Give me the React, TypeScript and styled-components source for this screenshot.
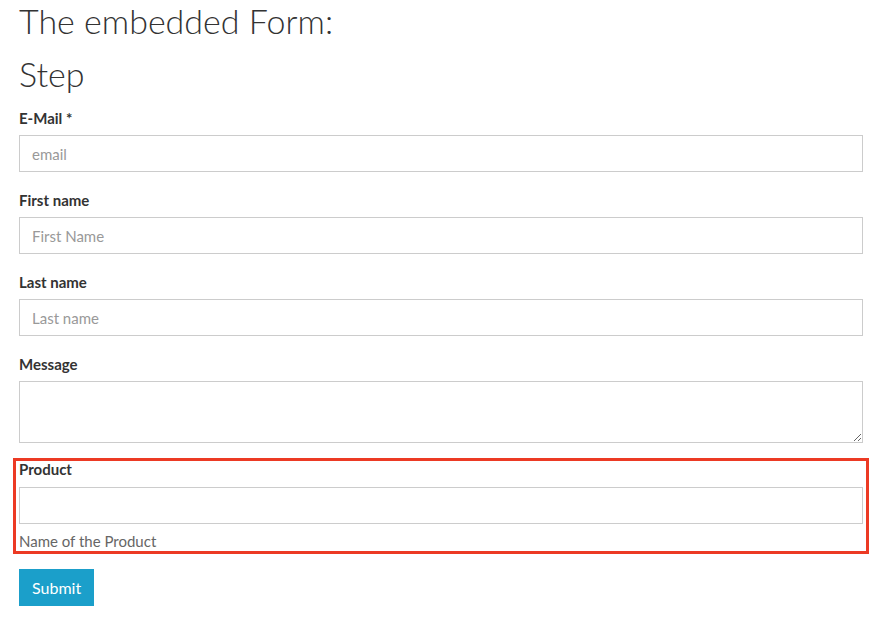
import styled, { createGlobalStyle } from "styled-components";

const GlobalStyle = createGlobalStyle`
  html, body {
    margin: 0;
    padding: 0;
    background: #ffffff;
  }
  body {
    font-family: Lato, "Open Sans", "Liberation Sans", sans-serif;
    color: #333333;
  }
`;

const Page = styled.div`
  padding: 0 14px 0 19px;
`;

const Title = styled.h1`
  margin: 0;
  font-size: 34px;
  font-weight: 300;
  line-height: 42px;
  color: #333333;
`;

const StepTitle = styled.h2`
  margin: 9px 0 0;
  font-size: 34px;
  font-weight: 300;
  line-height: 46px;
  color: #333333;
`;

const Form = styled.form`
  margin-top: 10px;
  display: flex;
  flex-direction: column;
`;

const Field = styled.div`
  display: flex;
  flex-direction: column;
  margin-bottom: 17px;
`;

const HighlightField = styled.div`
  display: flex;
  flex-direction: column;
  margin: -2px -6px 15px;
  padding: 0 3px;
  border: 3px solid #ec3a24;
`;

const Label = styled.label<{ $tight?: boolean }>`
  font-size: 15px;
  font-weight: 700;
  line-height: ${(p) => (p.$tight ? "16px" : "22px")};
  margin-bottom: ${(p) => (p.$tight ? "10px" : "6px")};
  color: #333333;
`;

const Input = styled.input`
  box-sizing: border-box;
  height: 37px;
  width: 100%;
  padding: 0 12px;
  border: 1px solid #cccccc;
  border-radius: 0;
  font-family: inherit;
  font-size: 15px;
  color: #333333;
  outline: none;

  &::placeholder {
    color: #999999;
  }
`;

const TextArea = styled.textarea`
  box-sizing: border-box;
  display: block;
  height: 62px;
  width: 100%;
  padding: 8px 12px;
  border: 1px solid #cccccc;
  border-radius: 0;
  font-family: inherit;
  font-size: 15px;
  outline: none;
`;

const Help = styled.div`
  margin-top: 7px;
  font-size: 15px;
  line-height: 20px;
  color: #666666;
`;

const SubmitButton = styled.button`
  align-self: flex-start;
  height: 37px;
  padding: 0 13px;
  border: none;
  border-radius: 0;
  background: #1b9fca;
  color: #ffffff;
  font-family: inherit;
  font-size: 16px;
  cursor: pointer;
`;

function App() {
  return (
    <Page>
      <GlobalStyle />
      <Title>The embedded Form:</Title>
      <StepTitle>Step</StepTitle>
      <Form onSubmit={(evt) => evt.preventDefault()}>
        <Field>
          <Label htmlFor="email">E-Mail *</Label>
          <Input id="email" type="email" placeholder="email" />
        </Field>
        <Field>
          <Label htmlFor="first">First name</Label>
          <Input id="first" type="text" placeholder="First Name" />
        </Field>
        <Field>
          <Label htmlFor="last">Last name</Label>
          <Input id="last" type="text" placeholder="Last name" />
        </Field>
        <Field>
          <Label htmlFor="message">Message</Label>
          <TextArea id="message" />
        </Field>
        <HighlightField>
          <Label htmlFor="product" $tight>
            Product
          </Label>
          <Input id="product" type="text" />
          <Help>Name of the Product</Help>
        </HighlightField>
        <SubmitButton type="submit">Submit</SubmitButton>
      </Form>
    </Page>
  );
}

export default App;
